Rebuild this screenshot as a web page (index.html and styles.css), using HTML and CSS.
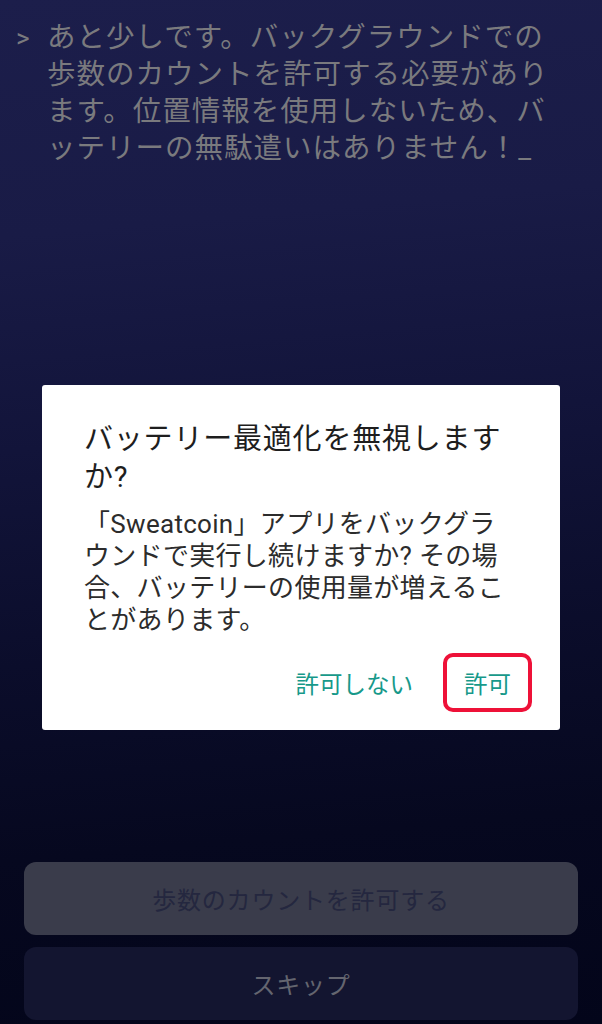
FILE: index.html
```html
<!DOCTYPE html>
<html lang="ja">
<head>
<meta charset="utf-8">
<title>Sweatcoin</title>
<link rel="stylesheet" href="styles.css">
</head>
<body>
<div class="screen">
  <div class="terminal">
    <span class="prompt">&gt;</span>
    <p class="terminal-text">あと少しです。バックグラウンドでの<br>歩数のカウントを許可する必要があり<br>ます。位置情報を使用しないため、バ<br>ッテリーの無駄遣いはありません！<span class="cursor">_</span></p>
  </div>
  <div class="spacer"></div>
  <div class="actions">
    <button class="btn btn-primary">歩数のカウントを許可する</button>
    <button class="btn btn-secondary">スキップ</button>
  </div>

  <div class="dialog" role="dialog">
    <h1 class="dialog-title">バッテリー最適化を無視しますか?</h1>
    <p class="dialog-body">「Sweatcoin」アプリをバックグラウンドで実行し続けますか? その場合、バッテリーの使用量が増えることがあります。</p>
    <div class="dialog-actions">
      <button class="dlg-btn">許可しない</button>
      <button class="dlg-btn dlg-btn-highlight">許可</button>
    </div>
  </div>
</div>
</body>
</html>
```
FILE: styles.css
```css
html, body {
  margin: 0;
  padding: 0;
}

body {
  width: 602px;
  height: 1024px;
  overflow: hidden;
  font-family: Roboto, "Noto Sans CJK JP", sans-serif;
}

.screen {
  position: relative;
  height: 1024px;
  display: flex;
  flex-direction: column;
  background: linear-gradient(175deg, #1c1e4b 0%, #191b46 22%, #12143a 42%, #0b0d2b 62%, #06081f 80%, #03051a 100%);
}

.terminal {
  display: flex;
  align-items: baseline;
  padding: 19px 8px 0 16px;
  color: #7a7a7e;
}

.prompt {
  width: 31px;
  flex: none;
  font-size: 26px;
}

.terminal-text {
  margin: 0;
  font-size: 28.5px;
  letter-spacing: 1px;
  line-height: 37px;
}

.cursor {
  letter-spacing: 0;
}

.spacer {
  flex: 1;
}

.actions {
  display: flex;
  flex-direction: column;
  gap: 12px;
  padding: 0 24px 4px;
}

.btn {
  height: 73px;
  border: none;
  border-radius: 12px;
  font-family: Roboto, "Noto Sans CJK JP", sans-serif;
  font-size: 24px;
  letter-spacing: 0.8px;
  padding: 0;
}

.btn-primary {
  background: #3a3c4b;
  color: #24273f;
}

.btn-secondary {
  background: #131530;
  color: #64656f;
}

.dialog {
  position: absolute;
  top: 385px;
  left: 42px;
  width: 518px;
  box-sizing: border-box;
  padding: 35px 28px 18px 42px;
  background: #ffffff;
  border-radius: 3px;
}

.dialog-title {
  margin: 0;
  width: 434px;
  font-size: 29px;
  font-weight: 400;
  letter-spacing: 0.8px;
  line-height: 38px;
  color: #1e1e1e;
}

.dialog-body {
  margin: 12px 0 0;
  width: 434px;
  font-size: 26px;
  letter-spacing: 0.3px;
  line-height: 32px;
  color: #2c2c2c;
}

.dialog-actions {
  display: flex;
  justify-content: flex-end;
  gap: 9px;
  margin-top: 17px;
}

.dlg-btn {
  height: 59px;
  padding: 0 17px;
  border: 4px solid transparent;
  border-radius: 10px;
  background: transparent;
  font-family: Roboto, "Noto Sans CJK JP", sans-serif;
  font-size: 23.5px;
  font-weight: 400;
  color: #17998a;
}

.dlg-btn-highlight {
  border-color: #ee1138;
}
```
